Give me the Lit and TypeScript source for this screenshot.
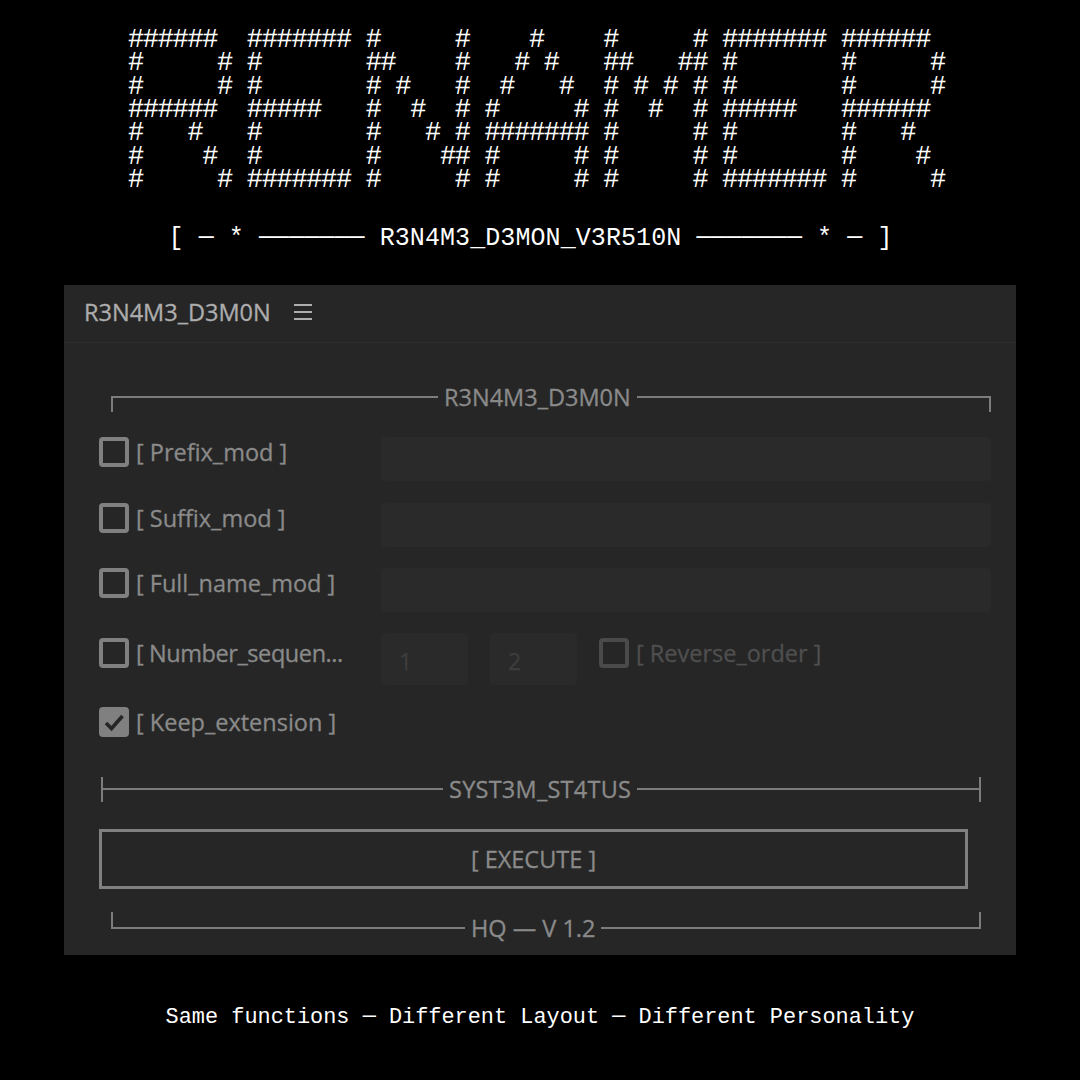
import { html, css, LitElement } from 'lit';
import { customElement } from 'lit/decorators.js';

const BANNER = [
  '######  ####### #     #    #    #     # ####### ###### ',
  '#     # #       ##    #   # #   ##   ## #       #     #',
  '#     # #       # #   #  #   #  # # # # #       #     #',
  '######  #####   #  #  # #     # #  #  # #####   ###### ',
  '#   #   #       #   # # ####### #     # #       #   #  ',
  '#    #  #       #    ## #     # #     # #       #    # ',
  '#     # ####### #     # #     # #     # ####### #     #',
].join('\n');

const SUBTITLE = '[ ─ * ─────── R3N4M3_D3MON_V3R510N ─────── * ─ ]';

@customElement('app-root')
export class AppRoot extends LitElement {
  static styles = css`
    :host {
      display: block;
      min-height: 1080px;
      background: #000;
      color: #fff;
      overflow: hidden;
      font-family: 'Open Sans', 'Noto Sans', sans-serif;
    }

    .banner {
      margin: 0;
      padding: 29px 0 0 128px;
      font-family: 'Liberation Mono', monospace;
      font-size: 27px;
      line-height: 23.33px;
      letter-spacing: -1.35px;
      white-space: pre;
      color: #fff;
    }

    .subtitle {
      margin-top: 31px;
      padding-right: 19px;
      height: 32px;
      line-height: 32px;
      text-align: center;
      font-family: 'Liberation Mono', monospace;
      font-size: 25px;
      letter-spacing: 0.08px;
      white-space: pre;
    }

    .panel {
      width: 952px;
      margin: 30px auto 0;
      background: #262626;
      box-sizing: border-box;
    }

    .panel-head {
      height: 58px;
      box-sizing: border-box;
      border-bottom: 1px solid #2e2e2e;
      display: flex;
      align-items: center;
      gap: 23px;
      padding-left: 20px;
      padding-bottom: 3px;
      color: #adadad;
      font-size: 23.5px;
      -webkit-text-stroke: 0.3px currentColor;
    }

    .panel-head svg {
      display: block;
    }

    .panel-body {
      padding: 39px 25px 12px 35px;
      color: #8a8a8a;
      font-size: 23.5px;
      -webkit-text-stroke: 0.3px currentColor;
    }

    .rule {
      display: flex;
      align-items: center;
      height: 30px;
      gap: 6px;
      white-space: nowrap;
    }

    .rule.top,
    .rule.bottom {
      margin-left: 12px;
    }

    .rule.status {
      margin: 37px 10px 0 2px;
    }

    .rule.status span {
      letter-spacing: 0.25px;
    }

    .rule.bottom {
      margin-top: 24px;
      margin-right: 10px;
    }

    .seg {
      flex: 1;
      height: 2px;
      background: #7c7c7c;
      position: relative;
    }

    .top .seg.left {
      flex: none;
      width: 327px;
    }

    .status .seg.left {
      flex: none;
      width: 342px;
    }

    .bottom .seg.left {
      flex: none;
      width: 354px;
    }

    .seg::after {
      content: '';
      position: absolute;
      width: 2px;
      background: #7c7c7c;
    }

    .seg.left::after {
      left: 0;
    }

    .seg.right::after {
      right: 0;
    }

    .top .seg::after {
      top: 0;
      height: 16px;
    }

    .status .seg::after {
      top: -11px;
      height: 25px;
    }

    .bottom .seg::after {
      bottom: 0;
      height: 17px;
    }

    .rows {
      margin-top: 25px;
      display: flex;
      flex-direction: column;
    }

    .row {
      display: flex;
      height: 44px;
      margin-bottom: 21.33px;
    }

    .row.seq {
      height: 52px;
      margin-bottom: 22px;
    }

    .row.seq .opt {
      padding-top: 5px;
    }

    .row.seq .main .label {
      letter-spacing: -0.42px;
    }

    .row.keep {
      height: 30px;
      margin-bottom: 0;
    }

    .opt {
      display: flex;
      align-items: flex-start;
      gap: 7px;
      white-space: nowrap;
    }

    .opt.main {
      width: 282px;
      flex: none;
    }

    .box {
      width: 30px;
      height: 30px;
      box-sizing: border-box;
      border: 4px solid #808080;
      border-radius: 4px;
      flex: none;
    }

    .box.checked {
      background: #808080;
    }

    .box svg {
      display: block;
    }

    .label {
      line-height: 30px;
    }

    .dim .box {
      border-color: #4a4a4a;
    }

    .dim .label {
      color: #4f4f4f;
    }

    .field {
      flex: 1;
      background: #2a2a2a;
      border-radius: 4px;
    }

    .num {
      width: 87px;
      flex: none;
      margin-right: 22px;
      background: #2a2a2a;
      border-radius: 4px;
      color: #3d3d3d;
      font-size: 23px;
      line-height: 56px;
      padding-left: 18px;
      box-sizing: border-box;
    }

    .execute {
      margin: 25px 23px 0 0;
      height: 60px;
      box-sizing: border-box;
      border: 3px solid #808080;
      display: flex;
      align-items: center;
      justify-content: center;
    }

    .footer {
      margin-top: 49px;
      text-align: center;
      font-family: 'Liberation Mono', monospace;
      font-size: 21.9px;
      line-height: 28px;
      white-space: pre;
    }
  `;

  private renderOpt(label: string, checked = false) {
    return html`
      <div class="opt main">
        <div class="box ${checked ? 'checked' : ''}">
          ${checked
            ? html`<svg width="22" height="22" viewBox="0 0 22 22">
                <path d="M3 12 L8.5 17.5 L19.5 5" fill="none" stroke="#262626" stroke-width="3.6" />
              </svg>`
            : ''}
        </div>
        <div class="label">${label}</div>
      </div>
    `;
  }

  render() {
    return html`
      <pre class="banner">${BANNER}</pre>
      <div class="subtitle">${SUBTITLE}</div>

      <div class="panel">
        <div class="panel-head">
          <span>R3N4M3_D3M0N</span>
          <svg width="18" height="16" viewBox="0 0 18 16">
            <path d="M0 1h18M0 8h18M0 15h18" stroke="#adadad" stroke-width="2" fill="none" />
          </svg>
        </div>

        <div class="panel-body">
          <div class="rule top">
            <div class="seg left"></div>
            <span>R3N4M3_D3M0N</span>
            <div class="seg right"></div>
          </div>

          <div class="rows">
            <div class="row">${this.renderOpt('[ Prefix_mod ]')}<div class="field"></div></div>
            <div class="row">${this.renderOpt('[ Suffix_mod ]')}<div class="field"></div></div>
            <div class="row">${this.renderOpt('[ Full_name_mod ]')}<div class="field"></div></div>
            <div class="row seq">
              ${this.renderOpt('[ Number_sequen...')}
              <div class="num">1</div>
              <div class="num">2</div>
              <div class="opt dim">
                <div class="box"></div>
                <div class="label">[ Reverse_order ]</div>
              </div>
            </div>
            <div class="row keep">${this.renderOpt('[ Keep_extension ]', true)}</div>
          </div>

          <div class="rule status">
            <div class="seg left"></div>
            <span>SYST3M_ST4TUS</span>
            <div class="seg right"></div>
          </div>

          <div class="execute">[ EXECUTE ]</div>

          <div class="rule bottom">
            <div class="seg left"></div>
            <span>HQ — V 1.2</span>
            <div class="seg right"></div>
          </div>
        </div>
      </div>

      <div class="footer">Same functions ─ Different Layout ─ Different Personality</div>
    `;
  }
}
